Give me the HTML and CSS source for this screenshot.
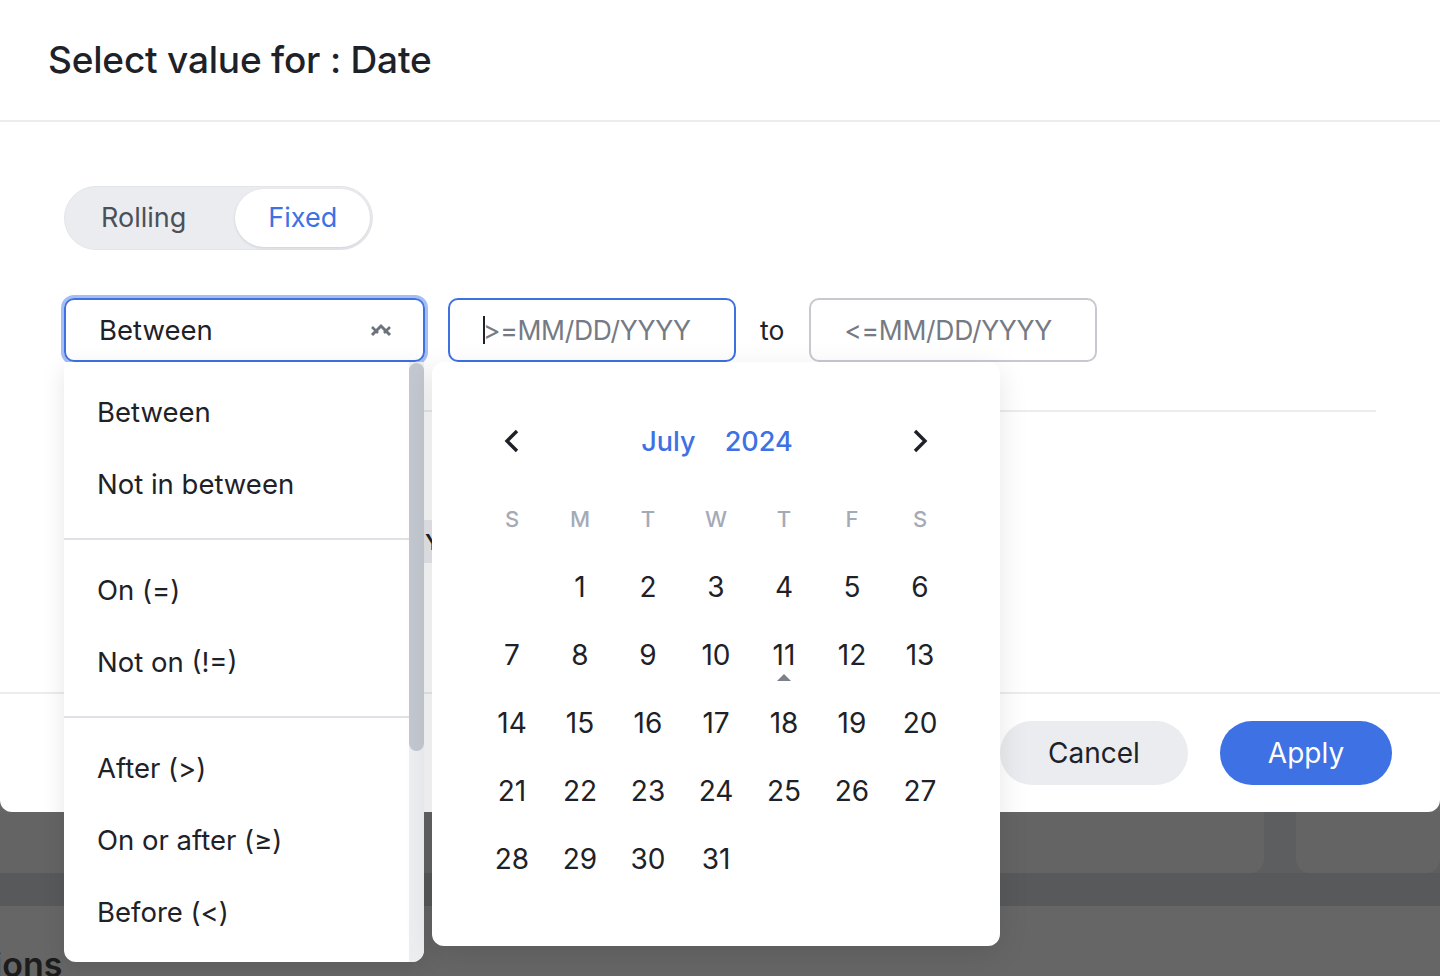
FILE: index.html
```html
<!DOCTYPE html>
<html>
<head>
<meta charset="utf-8">
<link rel="stylesheet" href="styles.css">
<title>Select value for : Date</title>
</head>
<body>
<div class="modal">
  <div class="modal-header">
    <h1>Select value for : Date</h1>
  </div>

  <div class="modal-body">
    <div class="segmented">
      <span class="segment">Rolling</span>
      <span class="segment active">Fixed</span>
    </div>

    <div class="filter-row">
      <div class="select focused">
        <span>Between</span>
        <svg class="select-icon" width="22" height="16" viewBox="0 0 22 16">
          <path d="M2 13 L11 4 L20 13" fill="none" stroke="#6d727c" stroke-width="3"/>
          <path d="M2 5 L8 11 M20 5 L14 11" fill="none" stroke="#6d727c" stroke-width="2.6"/>
        </svg>
      </div>
      <div class="date-input active"><span class="caret"></span><span class="placeholder">&gt;=MM/DD/YYYY</span></div>
      <span class="to">to</span>
      <div class="date-input"><span class="placeholder">&lt;=MM/DD/YYYY</span></div>

      <!-- operator menu -->
      <div class="menu">
        <div class="menu-list">
          <div class="menu-group">
            <div class="menu-item">Between</div>
            <div class="menu-item">Not in between</div>
          </div>
          <div class="menu-group">
            <div class="menu-item">On (=)</div>
            <div class="menu-item">Not on (!=)</div>
          </div>
          <div class="menu-group last">
            <div class="menu-item">After (&gt;)</div>
            <div class="menu-item">On or after (≥)</div>
            <div class="menu-item">Before (&lt;)</div>
          </div>
        </div>
        <div class="scrollbar"><div class="thumb"></div></div>
      </div>

      <!-- date picker -->
      <div class="calendar">
        <div class="cal-head">
          <svg class="nav" width="20" height="26" viewBox="0 0 20 26">
            <path d="M15 3 L5 13 L15 23" fill="none" stroke="#1e2228" stroke-width="3.4"/>
          </svg>
          <div class="cal-title"><span>July</span><span>2024</span></div>
          <svg class="nav" width="20" height="26" viewBox="0 0 20 26">
            <path d="M5 3 L15 13 L5 23" fill="none" stroke="#1e2228" stroke-width="3.4"/>
          </svg>
        </div>
        <div class="cal-grid">
          <span class="wd">S</span><span class="wd">M</span><span class="wd">T</span><span class="wd">W</span><span class="wd">T</span><span class="wd">F</span><span class="wd">S</span>
          <span></span><span>1</span><span>2</span><span>3</span><span>4</span><span>5</span><span>6</span>
          <span>7</span><span>8</span><span>9</span><span>10</span><span class="today">11</span><span>12</span><span>13</span>
          <span>14</span><span>15</span><span>16</span><span>17</span><span>18</span><span>19</span><span>20</span>
          <span>21</span><span>22</span><span>23</span><span>24</span><span>25</span><span>26</span><span>27</span>
          <span>28</span><span>29</span><span>30</span><span>31</span>
        </div>
      </div>
    </div>

    <div class="rule"></div>
    <div class="table-head"><span>Year</span></div>
  </div>

  <div class="modal-footer">
    <button class="btn btn-cancel">Cancel</button>
    <button class="btn btn-apply">Apply</button>
  </div>
</div>

<div class="page-behind">
  <div class="cards">
    <div class="card wide"></div>
    <div class="card"></div>
  </div>
  <div class="band"></div>
  <h2 class="section-title">Options</h2>
</div>
</body>
</html>
```

FILE: styles.css
```css
body {
	margin: 0;
	background-color: #666666;
	font-family: Inter, "Noto Sans", sans-serif;
	color: #1e2228;
	overflow: hidden;
}
.modal {
	height: 812px;
	background-color: white;
	border-radius: 0 0 12px 12px;
	display: flex;
	flex-direction: column;
}
.modal-header {
	flex: 0 0 auto;
	height: 120px;
	border-bottom: 2px solid #ebebf0;
	display: flex;
	align-items: center;
	padding: 0 48px;
}
h1 {
	margin: 0 0 2px;
	font-size: 37px;
	font-weight: 500;
	letter-spacing: -0.2px;
}
.modal-body {
	flex: 1;
	padding: 64px 64px 0;
}

/* rolling / fixed switch */
.segmented {
	display: inline-flex;
	align-items: center;
	gap: 15px;
	height: 58px;
	padding: 2px;
	border: 1px solid #e4e5ea;
	border-radius: 32px;
	background-color: #ebecf0;
}
.segment {
	font-size: 27px;
	color: #4b5058;
	padding: 0 34px;
	line-height: 58px;
	border-radius: 29px;
}
.segment.active {
	background-color: white;
	color: #3d71e4;
	padding: 0 33px;
	box-shadow: 0 1px 3px rgba(0, 0, 0, 0.12);
}

/* operator + dates */
.filter-row {
	position: relative;
	display: flex;
	align-items: center;
	margin-top: 48px;
	height: 64px;
}
.select {
	box-sizing: border-box;
	width: 361px;
	height: 64px;
	border: 2px solid #3d71e4;
	border-radius: 10px;
	box-shadow: 0 0 0 3px #a4bdf3;
	display: flex;
	align-items: center;
	justify-content: space-between;
	padding: 0 31px 0 33px;
	font-size: 27.5px;
}
.date-input {
	box-sizing: border-box;
	width: 288px;
	height: 64px;
	margin-left: 23px;
	border: 2px solid #c6c9cf;
	border-radius: 10px;
	display: flex;
	align-items: center;
	padding-left: 33px;
	font-size: 26.5px;
}
.date-input.active {
	border-color: #3d71e4;
}
.placeholder {
	color: #757a84;
	letter-spacing: -0.3px;
}
.caret {
	width: 2px;
	height: 28px;
	margin-right: -2px;
	background-color: #1e2228;
}
.to {
	font-size: 26.5px;
	margin-left: 24px;
}
.to + .date-input {
	margin-left: 25px;
}

.menu {
	position: absolute;
	top: 64px;
	left: 0;
	width: 360px;
	height: 600px;
	background-color: white;
	border-radius: 0 0 12px 12px;
	box-shadow: 0 6px 24px rgba(0, 0, 0, 0.10);
	display: flex;
	overflow: hidden;
	z-index: 2;
}
.menu-list {
	flex: 1;
}
.menu-group {
	padding: 14px 0 18px;
	border-bottom: 2px solid #dfe1e6;
}
.menu-group.last {
	border-bottom: none;
}
.menu-item {
	height: 72px;
	line-height: 72px;
	padding-left: 33px;
	font-size: 27.5px;
}
.scrollbar {
	width: 15px;
	background-color: #eceef1;
}
.thumb {
	height: 388px;
	margin-top: 1px;
	border-radius: 8px;
	background-color: #c3c7cf;
}

.calendar {
	position: absolute;
	top: 64px;
	left: 368px;
	box-sizing: border-box;
	width: 568px;
	height: 584px;
	padding: 57px 46px 0;
	background-color: white;
	border-radius: 12px;
	box-shadow: 0 8px 30px rgba(0, 0, 0, 0.10);
	z-index: 2;
}
.cal-head {
	height: 44px;
	display: flex;
	align-items: center;
	justify-content: space-between;
	padding: 0 24px;
}
.cal-title {
	display: flex;
	gap: 29px;
	font-size: 27px;
	font-weight: 500;
	color: #3d71e4;
	margin-left: 2px;
}
.cal-grid {
	margin-top: 22px;
	display: grid;
	grid-template-columns: repeat(7, 68px);
	grid-auto-rows: 68px;
}
.cal-grid span {
	display: flex;
	align-items: center;
	justify-content: center;
	font-size: 28px;
	position: relative;
}
.cal-grid .wd {
	font-size: 22px;
	font-weight: 500;
	color: #a4aab6;
}
.today::after {
	content: "";
	position: absolute;
	left: 27px;
	bottom: 8px;
	border-left: 7px solid transparent;
	border-right: 7px solid transparent;
	border-bottom: 7px solid #7b808a;
}

.rule {
	margin: 48px 0 0;
	height: 2px;
	background-color: #ebecf0;
}
.table-head {
	margin: 108px 386px 0 0;
	height: 43px;
	background-color: #ebecf0;
	display: flex;
	align-items: center;
	padding-left: 361px;
	font-size: 22px;
	font-weight: 600;
}

.modal-footer {
	height: 118px;
	border-top: 2px solid #ebecf0;
	display: flex;
	align-items: center;
	justify-content: flex-end;
	gap: 32px;
	padding: 0 48px;
}
.btn {
	height: 64px;
	border: none;
	border-radius: 32px;
	font-family: Inter, "Noto Sans", sans-serif;
	font-size: 28px;
}
.btn-cancel {
	width: 188px;
	background-color: #ebecf0;
	color: #1e2228;
}
.btn-apply {
	width: 172px;
	background-color: #3d71e4;
	color: white;
}

/* dimmed page under the dialog */
.page-behind {
	height: 164px;
}
.cards {
	display: flex;
	gap: 32px;
	height: 61px;
	background-color: #5d5e60;
}
.card {
	flex: 1;
	background-color: #646464;
	border-radius: 0 0 14px 14px;
}
.card.wide {
	flex: 0 0 1264px;
	border-radius: 0 0 14px 0;
}
.band {
	height: 33px;
	background-color: #58595b;
}
.section-title {
	margin: 38px 0 0 -66px;
	font-size: 34px;
	font-weight: 600;
	color: #1c1c1c;
}
```
